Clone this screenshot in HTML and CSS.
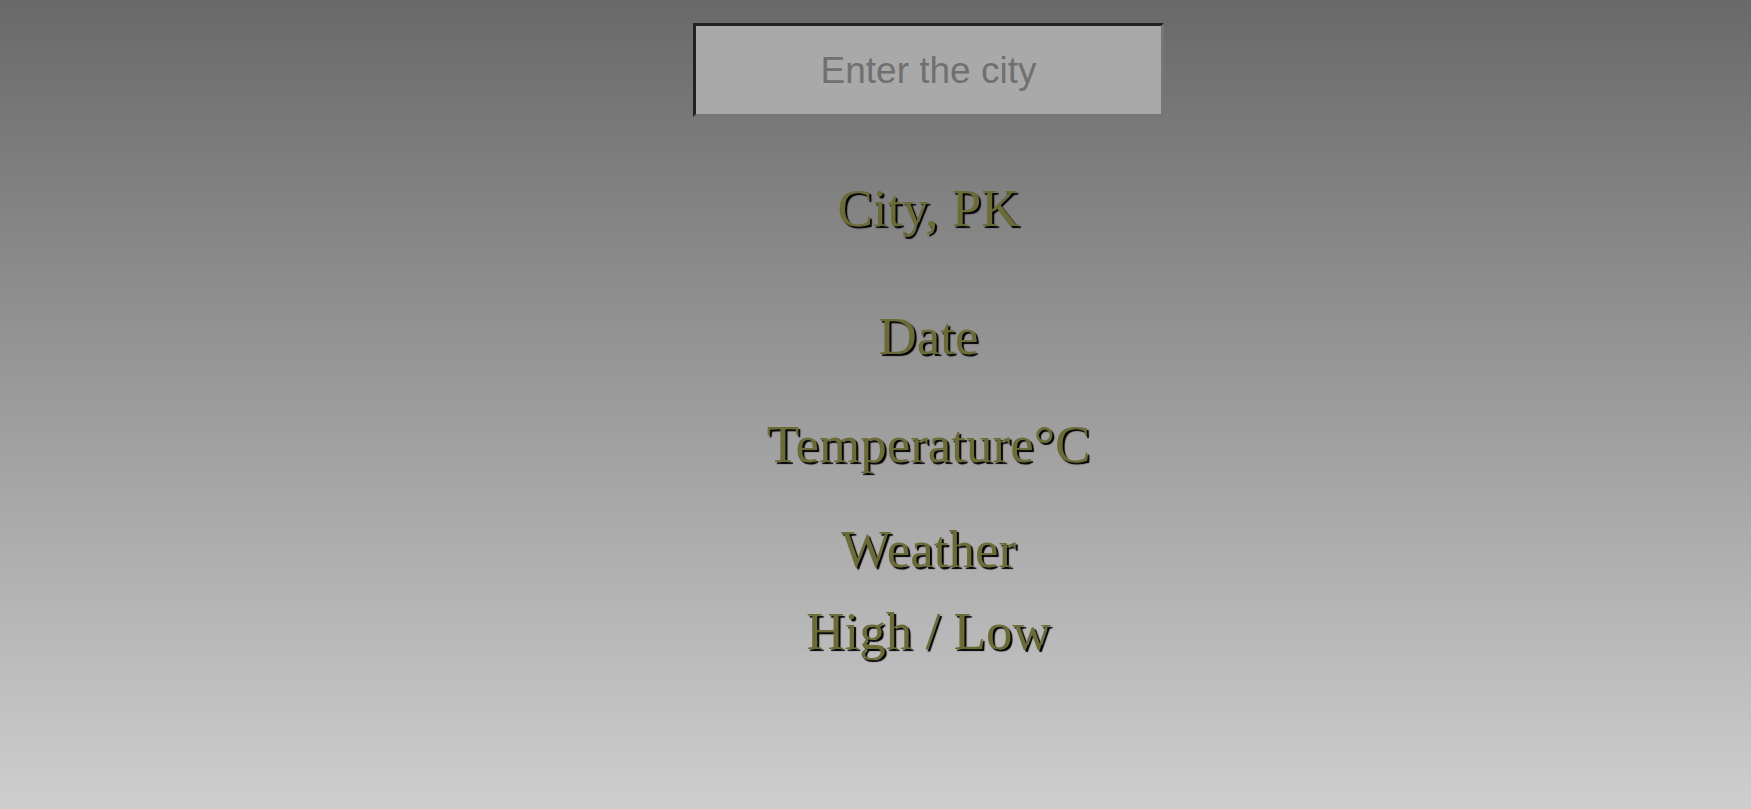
FILE: index.html
```html
<!DOCTYPE html>
<html lang="en">
<head>
<meta charset="utf-8">
<title>Weather</title>
<link rel="stylesheet" href="styles.css">
</head>
<body>
<main class="app">
  <div class="search">
    <input class="search-input" type="text" placeholder="Enter the city">
  </div>
  <section class="weather">
    <div class="location">City, PK</div>
    <div class="date">Date</div>
    <div class="temp">Temperature°C</div>
    <div class="condition">Weather</div>
    <div class="hilow">High / Low</div>
  </section>
</main>
</body>
</html>
```
FILE: styles.css
```css
html, body {
  margin: 0;
  padding: 0;
  height: 100%;
}
body {
  background: linear-gradient(to bottom, #696969 0%, #cecece 100%);
  font-family: "Liberation Serif", "Times New Roman", serif;
}
.app {
  display: flex;
  flex-direction: column;
  align-items: center;
  padding-left: 106px;
  padding-top: 23px;
}
.search-input {
  box-sizing: border-box;
  width: 471px;
  height: 94px;
  margin: 0;
  border-style: solid;
  border-width: 3px;
  border-color: #222222 #767676 #767676 #222222;
  background: #a9a9a9;
  font-family: "Liberation Sans", Arial, sans-serif;
  font-size: 37px;
  text-align: center;
  color: #333;
  outline: none;
  padding: 2px 10px 0;
}
.search-input::placeholder {
  color: #707070;
}
.weather {
  display: flex;
  flex-direction: column;
  align-items: center;
  color: #6b6b38;
  font-size: 53px;
  line-height: 60px;
  text-shadow: 2px 2px 1px #000;
}
.location { margin-top: 61px; }
.date { margin-top: 68px; }
.temp { margin-top: 48px; }
.condition { margin-top: 45px; }
.hilow { margin-top: 22px; }
```
